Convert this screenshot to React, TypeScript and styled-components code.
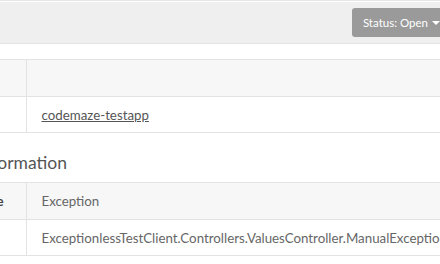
import React from "react";
import styled, { createGlobalStyle } from "styled-components";

const Global = createGlobalStyle`
  html, body { margin: 0; padding: 0; background: #fff; overflow: hidden; }
  body { font-family: "Lato", "Open Sans", sans-serif; color: #666; }
`;

const Page = styled.div`
  width: 500px;
  margin-left: -40px;
  padding-top: 1px;
  border-top: 1px solid #e6e6e6;
`;

const Toolbar = styled.div`
  display: flex;
  justify-content: flex-end;
  align-items: center;
  height: 41px;
  padding-right: 11px;
  background: #efefef;
  border-bottom: 1px solid #e3e3e3;
`;

const StatusButton = styled.button`
  display: flex;
  align-items: center;
  gap: 4px;
  height: 29px;
  padding: 0 9px 0 11px;
  border: none;
  border-radius: 3px;
  background: #9a9a9a;
  color: #fff;
  font-family: inherit;
  font-size: 11.5px;
  white-space: nowrap;
`;

const Caret = styled.span`
  width: 0;
  height: 0;
  border-left: 4px solid transparent;
  border-right: 4px solid transparent;
  border-top: 4px solid #fff;
`;

const Table = styled.table<{ $mt: number }>`
  width: 100%;
  table-layout: fixed;
  border-collapse: collapse;
  margin-top: ${(p) => p.$mt}px;
  font-size: 13.3px;
`;

const KeyCol = styled.col`
  width: 66px;
`;

const Row = styled.tr<{ $head?: boolean }>`
  background: ${(p) => (p.$head ? "#f7f7f7" : "#fff")};
  border-top: 1px solid #e3e3e3;
  border-bottom: 1px solid #e3e3e3;
  height: ${(p) => (p.$head ? "37px" : "36px")};
`;

const Cell = styled.td<{ $key?: boolean; $bold?: boolean }>`
  box-sizing: border-box;
  padding: 0 15px;
  border-right: ${(p) => (p.$key ? "1px solid #e3e3e3" : "none")};
  font-weight: ${(p) => (p.$bold ? 700 : 400)};
  color: ${(p) => (p.$bold ? "#444" : "#666")};
  white-space: nowrap;
  overflow: visible;
`;

const Link = styled.a`
  color: #555;
  text-decoration: underline;
`;

const Heading = styled.h4`
  margin: 16px 0 0 17px;
  font-size: 17.5px;
  font-weight: 400;
  color: #555;
  line-height: 28px;
  white-space: nowrap;
`;

export default function App() {
  return (
    <>
      <Global />
      <Page>
        <Toolbar>
          <StatusButton>
            Status: Open <Caret />
          </StatusButton>
        </Toolbar>
        <Table $mt={15}>
          <colgroup>
            <KeyCol />
            <col />
          </colgroup>
          <tbody>
            <Row $head>
              <Cell $key />
              <Cell />
            </Row>
            <Row>
              <Cell $key />
              <Cell>
                <Link href="#">codemaze-testapp</Link>
              </Cell>
            </Row>
          </tbody>
        </Table>
        <Heading>Information</Heading>
        <Table $mt={5}>
          <colgroup>
            <KeyCol />
            <col />
          </colgroup>
          <tbody>
            <Row $head>
              <Cell $key $bold>Type</Cell>
              <Cell>Exception</Cell>
            </Row>
            <Row>
              <Cell $key />
              <Cell>ExceptionlessTestClient.Controllers.ValuesController.ManualException</Cell>
            </Row>
          </tbody>
        </Table>
      </Page>
    </>
  );
}
